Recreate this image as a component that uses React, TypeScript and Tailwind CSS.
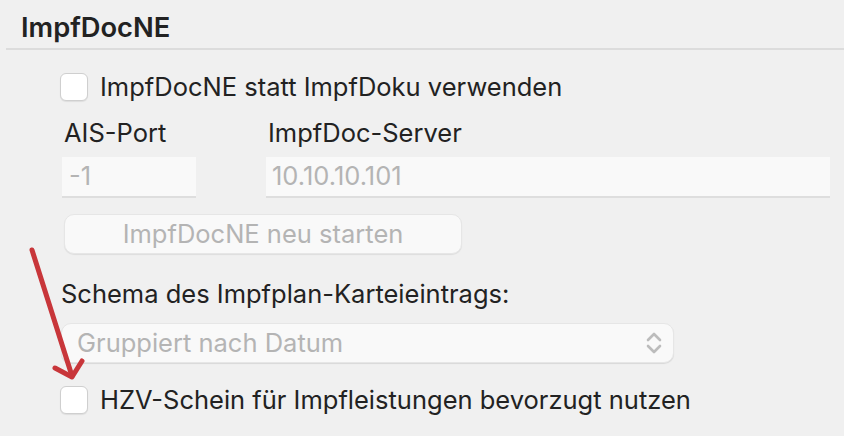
import React from "react";

function Checkbox() {
  return (
    <div className="w-[28px] h-[28px] rounded-[6px] bg-white border border-[#cfcfcf] shadow-[0_1px_1px_rgba(0,0,0,0.08)] shrink-0" />
  );
}

export default function App() {
  return (
    <div
      className="relative w-[844px] h-[436px] bg-[#f0f0f0] overflow-hidden text-[#222]"
      style={{ fontFamily: "Inter, 'Noto Sans', sans-serif" }}
    >
      <div className="pl-[21px] pt-[10px] h-[48px] text-[27.3px] font-semibold leading-[36px] text-[#222]">
        ImpfDocNE
      </div>
      <div className="ml-[6px] h-[2px] bg-[#dcdcdc]" />

      <div className="pl-[60px] pr-[14px]">
        <div className="flex items-center gap-[12px] mt-[23px] h-[28px]">
          <Checkbox />
          <span className="text-[25.5px] leading-[28px]">ImpfDocNE statt ImpfDoku verwenden</span>
        </div>

        <div className="flex mt-[16px] gap-[70px]">
          <div className="w-[134px] ml-[2px] flex flex-col">
            <span className="text-[25.5px] leading-[32px] ml-[2px]">AIS-Port</span>
            <div className="mt-[8px] h-[41px] bg-[#f9f9f9] border-b-[2px] border-[#dedede] flex items-center px-[7px] text-[25.5px] text-[#b4b4b4]">
              -1
            </div>
          </div>
          <div className="flex-1 flex flex-col">
            <span className="text-[25.5px] leading-[32px] ml-[2px]">ImpfDoc-Server</span>
            <div className="mt-[8px] h-[41px] bg-[#f9f9f9] border-b-[2px] border-[#dedede] flex items-center px-[6px] text-[25.5px] text-[#b4b4b4]">
              10.10.10.101
            </div>
          </div>
        </div>

        <div className="mt-[16px] ml-[4px] w-[398px] h-[40px] rounded-[10px] bg-[#f9f9f9] border border-[#e6e6e6] shadow-[0_1px_1px_rgba(0,0,0,0.08)] flex items-center justify-center text-[25.5px] text-[#b4b4b4]">
          ImpfDocNE neu starten
        </div>

        <div className="mt-[24px] ml-[1px] text-[25.5px] leading-[32px]">Schema des Impfplan-Karteieintrags:</div>

        <div className="mt-[13px] ml-[1px] w-[613px] h-[40px] rounded-[10px] bg-[#f9f9f9] border border-[#e6e6e6] shadow-[0_1px_1px_rgba(0,0,0,0.1)] flex items-center justify-between pl-[15px] pr-[11px] text-[25.5px] text-[#b4b4b4]">
          <span>Gruppiert nach Datum</span>
          <svg width="16" height="22" viewBox="0 0 16 22" fill="none" stroke="#bcbcbc" strokeWidth="2.6" strokeLinecap="round" strokeLinejoin="round">
            <path d="M2 8 L8 2 L14 8" />
            <path d="M2 14 L8 20 L14 14" />
          </svg>
        </div>

        <div className="flex items-center gap-[12px] mt-[23px] h-[28px]">
          <Checkbox />
          <span className="text-[25.5px] leading-[28px]">HZV-Schein für Impfleistungen bevorzugt nutzen</span>
        </div>
      </div>

      <svg className="absolute left-0 top-0 pointer-events-none" width="844" height="436">
        <g stroke="#c8363a" strokeWidth="5" strokeLinecap="round" strokeLinejoin="round" fill="none">
          <path d="M32 250 L72 376" />
          <path d="M55 368 L72 377 L82 361" />
        </g>
      </svg>
    </div>
  );
}
